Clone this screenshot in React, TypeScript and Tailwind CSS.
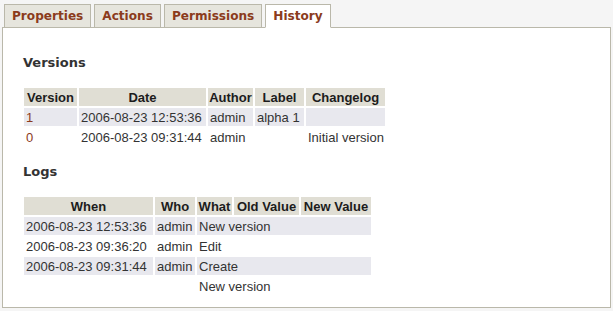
import React from 'react';

const tabs = ['Properties', 'Actions', 'Permissions', 'History'];

const versions = [
    { version: '1', date: '2006-08-23 12:53:36', author: 'admin', label: 'alpha 1', changelog: '' },
    { version: '0', date: '2006-08-23 09:31:44', author: 'admin', label: '', changelog: 'Initial version' },
];

const logs = [
    { when: '2006-08-23 12:53:36', who: 'admin', what: 'New version' },
    { when: '2006-08-23 09:36:20', who: 'admin', what: 'Edit' },
    { when: '2006-08-23 09:31:44', who: 'admin', what: 'Create' },
    { when: '', who: '', what: 'New version' },
];

const th = 'h-[18px] p-0 bg-[#e0ded4] text-[#1c1c1c] font-bold text-center whitespace-nowrap';
const td = 'h-[18px] p-0 pl-[2px] text-left whitespace-nowrap';
const tableCls = "border-separate border-spacing-[2px] text-[13px] leading-[15px] font-['Liberation_Sans'] text-[#333]";

export default function App() {
    return (
        <div className="w-[613px] h-[311px] bg-[#f5f5f5] pt-[4px] pl-[2px] text-[#333]">
            <div className="relative z-10 -mb-px flex gap-[3px] pl-[2px]">
                {tabs.map((t) => (
                    <div
                        key={t}
                        className={`h-[24px] px-[7px] border border-[#bab8aa] flex items-center font-['DejaVu_Sans'] font-bold text-[12.1px] text-[#8b3b1c] ${
                            t === 'History' ? 'bg-white border-b-white' : 'bg-[#e6e5dd]'
                        }`}
                    >
                        {t}
                    </div>
                ))}
            </div>

            <div className="w-[609px] h-[281px] bg-white border border-[#bab8aa] pl-[19px] pt-[27px]">
                <h2 className="ml-px h-[16px] leading-[16px] font-['DejaVu_Sans'] font-bold text-[13px] text-[#333]">Versions</h2>
                <table className={`mt-[15px] ${tableCls}`}>
                    <thead>
                        <tr>
                            <th className={`${th} w-[53px]`}>Version</th>
                            <th className={`${th} w-[127px]`}>Date</th>
                            <th className={`${th} w-[45px]`}>Author</th>
                            <th className={`${th} w-[49px]`}>Label</th>
                            <th className={`${th} w-[79px]`}>Changelog</th>
                        </tr>
                    </thead>
                    <tbody>
                        {versions.map((v, i) => (
                            <tr key={v.version} className={i % 2 === 0 ? 'bg-[#e8e8ee]' : ''}>
                                <td className={`${td} text-[#8b3b1c]`}>{v.version}</td>
                                <td className={td}>{v.date}</td>
                                <td className={td}>{v.author}</td>
                                <td className={td}>{v.label}</td>
                                <td className={td}>{v.changelog}</td>
                            </tr>
                        ))}
                    </tbody>
                </table>

                <h2 className="ml-px mt-[16px] h-[16px] leading-[16px] font-['DejaVu_Sans'] font-bold text-[13px] text-[#333]">Logs</h2>
                <table className={`mt-[15px] ${tableCls}`}>
                    <thead>
                        <tr>
                            <th className={`${th} w-[129px]`}>When</th>
                            <th className={`${th} w-[40px]`}>Who</th>
                            <th className={`${th} w-[35px]`}>What</th>
                            <th className={`${th} w-[65px]`}>Old Value</th>
                            <th className={`${th} w-[70px]`}>New Value</th>
                        </tr>
                    </thead>
                    <tbody>
                        {logs.map((l, i) => (
                            <tr key={i} className={i % 2 === 0 ? 'bg-[#e8e8ee]' : ''}>
                                <td className={td}>{l.when}</td>
                                <td className={td}>{l.who}</td>
                                <td className={td} colSpan={3}>{l.what}</td>
                            </tr>
                        ))}
                    </tbody>
                </table>
            </div>
        </div>
    );
}
